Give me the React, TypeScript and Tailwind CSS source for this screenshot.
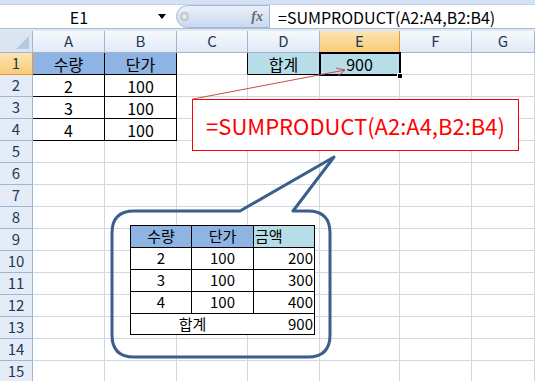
import React from 'react';

const FONT = { fontFamily: '"Noto Sans CJK KR", "Noto Sans", sans-serif' };

const COLS = ['A', 'B', 'C', 'D', 'E', 'F', 'G'];
const WIDTHS = ['w-[72px]', 'w-[72px]', 'w-[71px]', 'w-[72px]', 'w-[80px]', 'w-[72px]', 'flex-1'];

type CellProps = {
  w: string;
  r?: string;
  b?: string;
  className?: string;
  children?: React.ReactNode;
};

function Cell({ w, r = 'border-r-[#d0d7e5]', b = 'border-b-[#d0d7e5]', className = '', children }: CellProps) {
  return (
    <div className={`${w} h-full shrink-0 flex items-center justify-center border-r border-b ${r} ${b} ${className}`}>
      {children}
    </div>
  );
}

function RowHead({ n, active }: { n: number; active?: boolean }) {
  return (
    <div
      className={`w-[33px] h-full shrink-0 flex items-center justify-center border-r border-b text-[15px] ${
        active
          ? 'bg-linear-to-b from-[#fce5b0] to-[#f8cb78] border-r-[#f29436] border-b-[#f29436] text-[#1e395b]'
          : 'bg-[#e4ecf7] border-r-[#9eb6ce] border-b-[#9eb6ce] text-[#1e395b]'
      }`}
    >
      {n}
    </div>
  );
}

function FormulaBar() {
  return (
    <div>
      <div className="h-[5px] bg-[#d5e2f3] border-b border-[#c3d3e8]" />
      <div className="h-[24px] flex bg-white border-b border-[#a9bcd5]">
        <div className="w-[176px] flex items-center">
          <div className="w-[158px] text-center text-[16px] text-black">E1</div>
          <div className="w-0 h-0 border-l-[4px] border-r-[4px] border-t-[5px] border-l-transparent border-r-transparent border-t-black" />
        </div>
        <div className="w-[94px] h-full flex items-center justify-between pl-[3px] pr-[6px] rounded-l-full border border-[#a3b8d4] bg-linear-to-b from-[#eaf1fa] to-[#c9d9ee]">
          <div className="w-[9px] h-[9px] rounded-full bg-radial from-[#f4f4f4] to-[#a8a8a8]" />
          <span className="text-[14px] italic font-bold text-[#6b6b6b]" style={{ fontFamily: '"Liberation Serif", serif' }}>
            fx
          </span>
        </div>
        <div className="flex-1 flex items-center pl-[8px] text-[16px] text-black">=SUMPRODUCT(A2:A4,B2:B4)</div>
      </div>
      <div className="h-[2px] bg-[#dfe8f5]" />
    </div>
  );
}

function HeaderRow() {
  return (
    <div className="flex h-[22px]">
      <div className="w-[33px] h-full shrink-0 relative bg-[#dce6f2] border-r border-b border-[#9eb6ce]">
        <svg className="absolute right-[3px] bottom-[3px]" width="13" height="13">
          <polygon points="13,0 13,13 0,13" fill="#b6c9e2" />
        </svg>
      </div>
      {COLS.map((c, i) => (
        <div
          key={c}
          className={`${WIDTHS[i]} h-full shrink-0 flex items-center justify-center border-r border-b text-[15px] text-[#1e395b] ${
            c === 'E'
              ? 'bg-linear-to-b from-[#fce5b0] to-[#f8cb78] border-r-[#f29436] border-b-[#f29436]'
              : 'bg-linear-to-b from-[#f7fafd] to-[#e1e9f5] border-r-[#9eb6ce] border-b-[#9eb6ce]'
          }`}
        >
          {c}
        </div>
      ))}
    </div>
  );
}

function DataRow({ n }: { n: number }) {
  const blk = 'border-r-black';
  const blkB = 'border-b-black';
  if (n === 1) {
    return (
      <div className="flex h-[22px]">
        <RowHead n={1} active />
        <Cell w={WIDTHS[0]} r={blk} b={blkB} className="bg-[#8db4e2]">수량</Cell>
        <Cell w={WIDTHS[1]} r={blk} b={blkB} className="bg-[#8db4e2]">단가</Cell>
        <Cell w={WIDTHS[2]} r={blk} />
        <Cell w={WIDTHS[3]} r={blk} b={blkB} className="bg-[#b7dee8]">합계</Cell>
        <Cell w={WIDTHS[4]} r={blk} b={blkB} className="bg-[#b7dee8]">900</Cell>
        <Cell w={WIDTHS[5]} />
        <Cell w={WIDTHS[6]} />
      </div>
    );
  }
  if (n >= 2 && n <= 4) {
    return (
      <div className="flex h-[22px]">
        <RowHead n={n} />
        <Cell w={WIDTHS[0]} r={blk} b={blkB}>{n}</Cell>
        <Cell w={WIDTHS[1]} r={blk} b={blkB}>100</Cell>
        {WIDTHS.slice(2).map((w, i) => (
          <Cell key={i} w={w} />
        ))}
      </div>
    );
  }
  return (
    <div className="flex h-[22px]">
      <RowHead n={n} />
      {WIDTHS.map((w, i) => (
        <Cell key={i} w={w} />
      ))}
    </div>
  );
}

function Callout() {
  return (
    <>
      {/* red arrow from formula box to E1, and the speech bubble */}
      <svg className="absolute left-0 top-0 pointer-events-none" width="535" height="381">
        <line x1="193" y1="99" x2="345" y2="70" stroke="#c0504d" strokeWidth="1" />
        <polyline points="336,68 345,70 338,76" fill="none" stroke="#c0504d" strokeWidth="1" />
        <path
          d="M134 211 H240 L334 157 L293 211 H308 Q330 211 330 233 V335 Q330 357 308 357 H134 Q112 357 112 335 V233 Q112 211 134 211 Z"
          fill="none"
          stroke="#3b5e8b"
          strokeWidth="3"
          strokeLinejoin="round"
        />
      </svg>

      {/* formula text box */}
      <div className="absolute left-[192px] top-[99px] w-[327px] h-[52px] bg-white border border-[#ff0000] flex items-center justify-center text-[22px] text-[#ff0000]">
        =SUMPRODUCT(A2:A4,B2:B4)
      </div>

      {/* table inside the bubble */}
      <div className="absolute left-[130px] top-[225px] w-[185px] border-l border-t border-black bg-white text-[15px] text-black">
        <div className="flex h-[22px]">
          <div className="w-[61px] border-r border-b border-black bg-[#8db4e2] flex items-center justify-center">수량</div>
          <div className="w-[62px] border-r border-b border-black bg-[#8db4e2] flex items-center justify-center">단가</div>
          <div className="flex-1 border-r border-b border-black bg-[#b7dee8] flex items-center pl-[1px]">금액</div>
        </div>
        {[
          ['2', '200'],
          ['3', '300'],
          ['4', '400'],
        ].map(([q, t]) => (
          <div key={q} className="flex h-[22px]">
            <div className="w-[61px] border-r border-b border-black flex items-center justify-center">{q}</div>
            <div className="w-[62px] border-r border-b border-black flex items-center justify-center">100</div>
            <div className="flex-1 border-r border-b border-black flex items-center justify-end pr-[1px]">{t}</div>
          </div>
        ))}
        <div className="flex h-[21px] border-r border-b border-black">
          <div className="w-[123px] flex items-center justify-center">합계</div>
          <div className="flex-1 flex items-center justify-end pr-[1px]">900</div>
        </div>
      </div>
    </>
  );
}

export default function App() {
  return (
    <div className="relative w-[535px] h-[381px] overflow-hidden bg-white" style={FONT}>
      <FormulaBar />
      <HeaderRow />
      {Array.from({ length: 15 }, (_, i) => (
        <DataRow key={i} n={i + 1} />
      ))}

      {/* active cell E1 */}
      <div className="absolute left-[319px] top-[52px] w-[82px] h-[24px] border-2 border-black" />
      <div className="absolute left-[397px] top-[73px] w-[6px] h-[6px] bg-black border border-white" />

      <Callout />
    </div>
  );
}
